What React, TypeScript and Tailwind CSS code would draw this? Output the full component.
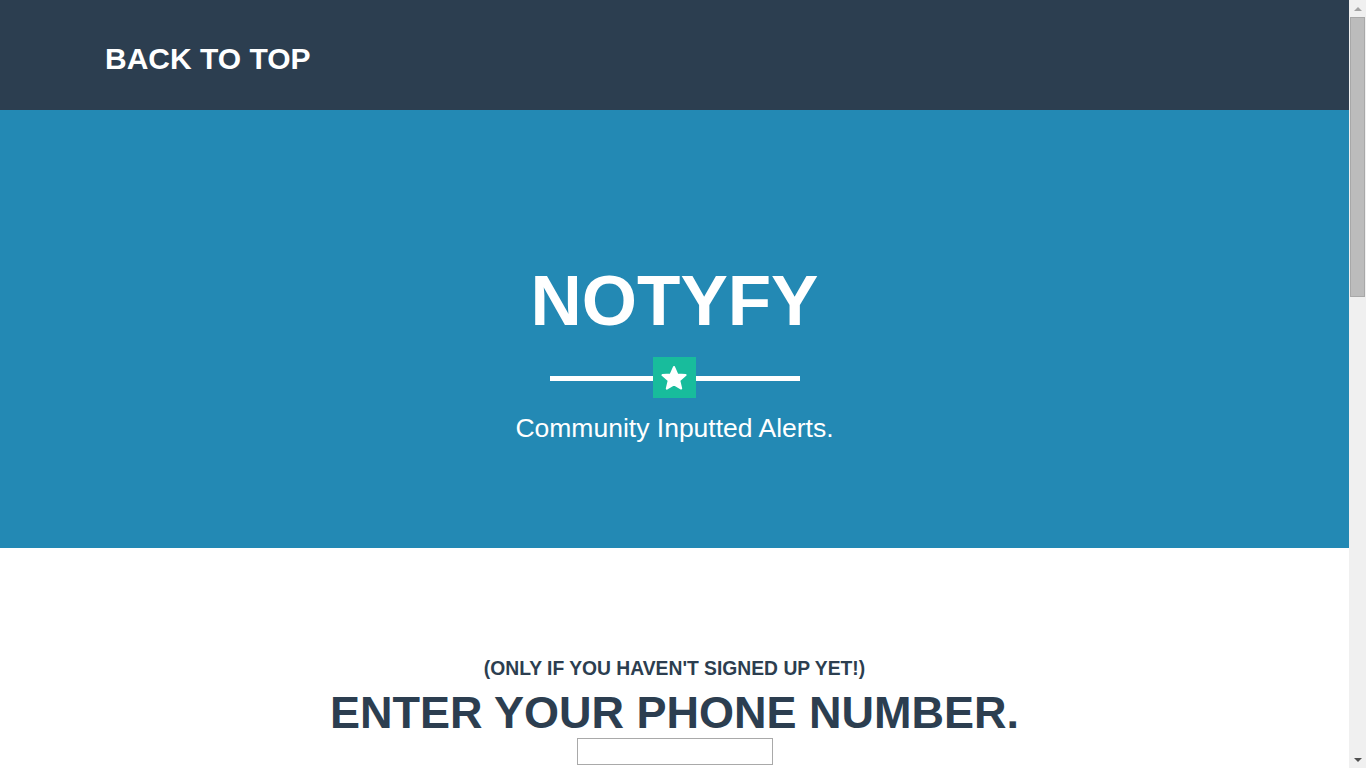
import React from "react";

function StarRule() {
	return (
		<div className="mt-[21px] flex h-[41px] w-[250px]">
			<div className="mt-[19px] h-[5px] w-[103px] bg-white" />
			<div className="flex h-[41px] w-[43px] items-center justify-center bg-[#18bc9c]">
				<svg width="28" height="26" viewBox="0 0 28 26" aria-hidden="true">
					<polygon
						points="14,2 17.3,9.4 25.6,10.1 19.3,15.6 21.2,23.6 14,19.4 6.8,23.6 8.7,15.6 2.4,10.1 10.7,9.4"
						fill="#ffffff"
						stroke="#ffffff"
						strokeWidth="2"
						strokeLinejoin="round"
					/>
				</svg>
			</div>
			<div className="mt-[19px] h-[5px] w-[104px] bg-white" />
		</div>
	);
}

// window scrollbar as it shows in the capture
function ScrollRail() {
	return (
		<aside className="sticky top-0 flex h-screen w-[17px] shrink-0 flex-col items-center bg-[#f0f0f0]">
			<div className="flex h-[17px] items-center justify-center">
				<div className="h-0 w-0 border-x-[4px] border-b-[4px] border-x-transparent border-b-[#a3a3a3]" />
			</div>
			<div className="h-[280px] w-[15px] border border-[#a8a8a8] bg-[#bcbcbc]" />
			<div className="flex-1" />
			<div className="flex h-[17px] items-center justify-center">
				<div className="h-0 w-0 border-x-[4px] border-t-[4px] border-x-transparent border-t-[#505050]" />
			</div>
		</aside>
	);
}

export default function App() {
	return (
		<div className="flex bg-white font-['Liberation_Sans',Arial,sans-serif]">
			<main className="min-w-0 flex-1">
				{/* top bar */}
				<nav className="h-[110px] bg-[#2c3e50] pl-[105px] pt-[44px]">
					<a href="#page-top" className="text-[30px] font-bold leading-none text-white">
						BACK TO TOP
					</a>
				</nav>

				{/* header */}
				<header className="flex h-[438px] flex-col items-center bg-[#2389b4] pt-[155px] text-white">
					<h1 className="text-[71px] font-bold leading-none">NOTYFY</h1>
					<StarRule />
					<p className="mt-[17px] text-[26.5px] leading-none">Community Inputted Alerts.</p>
				</header>

				{/* sign up */}
				<section className="flex h-[1450px] flex-col items-center pt-[111px] text-[#2c3e50]">
					<h3 className="text-[19.3px] font-bold leading-none">(ONLY IF YOU HAVEN'T SIGNED UP YET!)</h3>
					<h2 className="mt-[12px] text-[45px] font-bold leading-none">ENTER YOUR PHONE NUMBER.</h2>
					<input
						type="tel"
						className="mt-[3px] h-[27px] w-[196px] border border-[#a9a9a9] bg-white px-1 text-sm outline-none"
					/>
				</section>
			</main>
			<ScrollRail />
		</div>
	);
}
